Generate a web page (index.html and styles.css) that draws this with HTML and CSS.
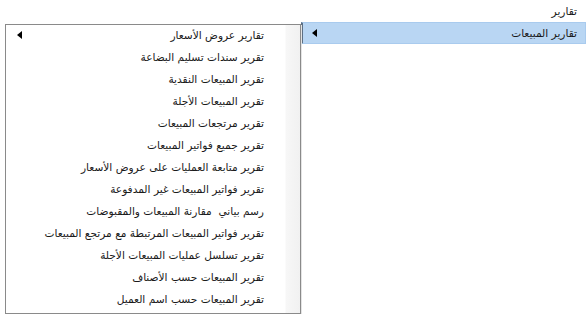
FILE: index.html
```html
<!DOCTYPE html>
<html lang="ar" dir="rtl">
<head>
<meta charset="utf-8">
<link rel="stylesheet" href="styles.css">
</head>
<body>
<div class="menubar"><span class="top-item">تقارير</span></div>
<div class="menus">
  <div class="level1">
    <div class="item1 active"><span>تقارير المبيعات</span><i class="arrow"></i></div>
  </div>
  <div class="submenu">
    <div class="item"><span>تقارير عروض الأسعار</span><i class="arrow"></i></div>
    <div class="item"><span>تقرير سندات تسليم البضاعة</span></div>
    <div class="item"><span>تقرير المبيعات النقدية</span></div>
    <div class="item"><span>تقرير المبيعات الأجلة</span></div>
    <div class="item"><span>تقرير مرتجعات المبيعات</span></div>
    <div class="item"><span>تقرير جميع فواتير المبيعات</span></div>
    <div class="item"><span>تقرير متابعة العمليات على عروض الأسعار</span></div>
    <div class="item"><span>تقرير فواتير المبيعات غير المدفوعة</span></div>
    <div class="item"><span>رسم بياني&nbsp; مقارنة المبيعات والمقبوضات</span></div>
    <div class="item"><span>تقرير فواتير المبيعات المرتبطة مع مرتجع المبيعات</span></div>
    <div class="item"><span>تقرير تسلسل عمليات المبيعات الأجلة</span></div>
    <div class="item"><span>تقرير المبيعات حسب الأصناف</span></div>
    <div class="item"><span>تقرير المبيعات حسب اسم العميل</span></div>
  </div>
</div>
</body>
</html>
```
FILE: styles.css
```css
html, body {
  margin: 0;
  padding: 0;
  background: #ffffff;
}
body {
  width: 586px;
  height: 314px;
  overflow: hidden;
  font-family: "DejaVu Sans", sans-serif;
  font-size: 10.6px;
  color: #1a1a1a;
}
.menubar {
  height: 22px;
  display: flex;
  align-items: center;
  padding-right: 9px;
  padding-bottom: 1px;
  box-sizing: border-box;
}
.menus {
  display: flex;
  align-items: flex-start;
}
.level1 {
  width: 285px;
}
.item1 {
  height: 20px;
  display: flex;
  align-items: center;
  justify-content: space-between;
  padding: 0 8px 0 9px;
  background: #b9d6f3;
  border-top: 1px solid #a9cbee;
  border-bottom: 1px solid #a9cbee;
  border-right: 1px solid #a9cbee;
  border-left: 2px solid #5c6f84;
}
.arrow {
  display: block;
  width: 0;
  height: 0;
  border-top: 4px solid transparent;
  border-bottom: 4px solid transparent;
  border-right: 5px solid #000;
}
.submenu {
  margin-top: 2px;
  width: 294px;
  border: 1px solid #8a8a8a;
  background: linear-gradient(to left, #f1f1f1 0, #f7f7f7 14px, #ffffff 15px, #ffffff 100%);
  padding: 0 0 2px;
  box-shadow: 1px 1px 0 #e4e4e4;
}
.item {
  height: 22px;
  box-sizing: border-box;
  padding: 0 36px 2px 11px;
  display: flex;
  align-items: center;
  justify-content: space-between;
}
```
